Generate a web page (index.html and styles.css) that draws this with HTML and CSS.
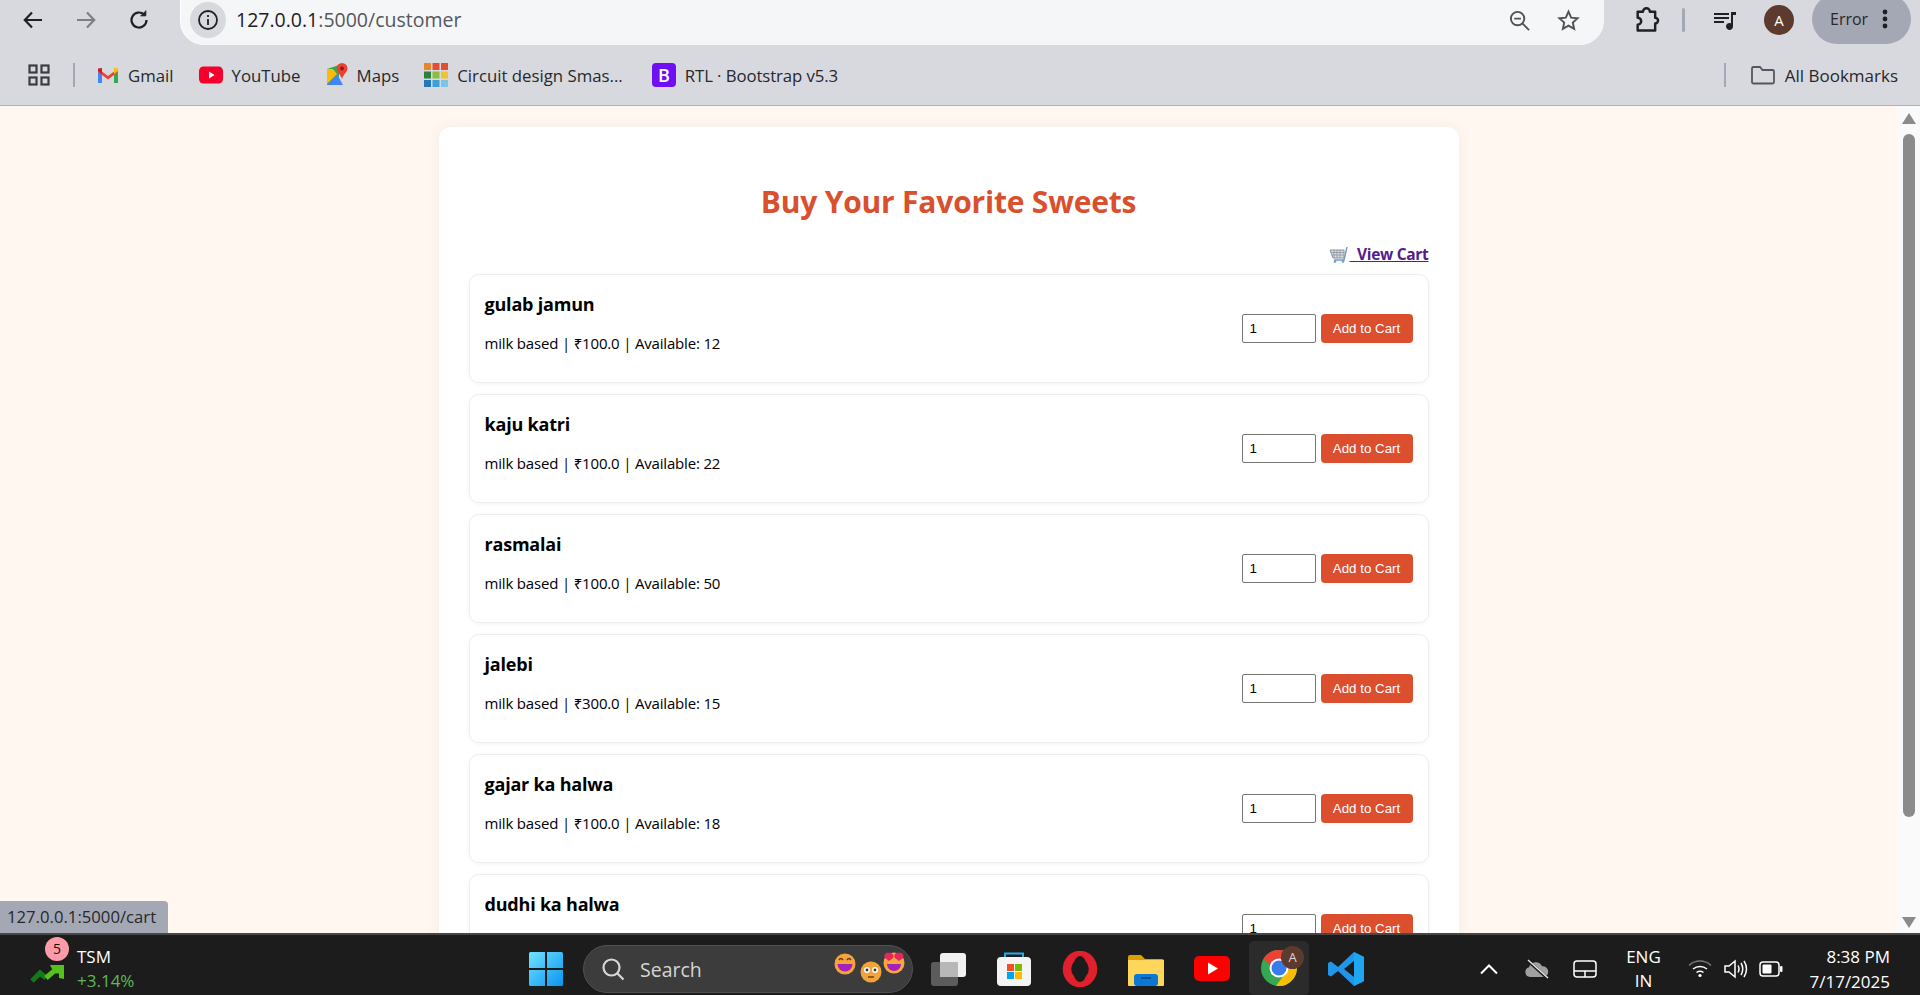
FILE: index.html
```html
<!DOCTYPE html>
<html>
<head>
  <title>Buy Your Favorite Sweets</title>
  <link rel="stylesheet" href="styles.css">
</head>
<body>
  <!-- browser toolbar -->
  <header class="browser">
    <div class="toolbar">
      <div class="nav-btns">
        <svg class="ico" viewBox="0 0 24 24" fill="none" stroke="#1f2024" stroke-width="2.2"><path d="M21 12H4M11 4.5 3.8 12l7.2 7.5"/></svg>
        <svg class="ico" viewBox="0 0 24 24" fill="none" stroke="#7d7f86" stroke-width="2.2"><path d="M3 12h17M13 4.5l7.2 7.5-7.2 7.5"/></svg>
        <svg class="ico" viewBox="0 0 24 24" fill="none" stroke="#1f2024" stroke-width="2.2"><path d="M19.5 12a7.5 7.5 0 1 1-2.4-5.5"/><path d="M18.8 2.5v5.3h-5.3" fill="#1f2024" stroke-width="1"/></svg>
      </div>
      <div class="omnibox">
        <span class="site-info">
          <svg viewBox="0 0 24 24" width="24" height="24" fill="none" stroke="#1f2024" stroke-width="1.8"><circle cx="12" cy="12" r="9"/><path d="M12 11v6M12 7v2"/></svg>
        </span>
        <span class="url">127.0.0.1<span class="url-dim">:5000/customer</span></span>
        <span class="spacer"></span>
        <svg class="ico-sm" viewBox="0 0 24 24" fill="none" stroke="#505257" stroke-width="2"><circle cx="10" cy="10" r="7"/><path d="M15 15l7 7M6.5 10h7"/></svg>
        <svg class="ico-sm star" viewBox="0 0 24 24" fill="none" stroke="#505257" stroke-width="2"><path d="M12 2.8l2.8 6.2 6.7.7-5 4.5 1.4 6.6-5.9-3.4-5.9 3.4 1.4-6.6-5-4.5 6.7-.7z"/></svg>
      </div>
      <svg class="ico puzzle" viewBox="0 0 24 24" fill="none" stroke="#1f2024" stroke-width="2.1"><path d="M4 5h4.500a3 3 0 0 1 6 0H19v5a2.500 2.500 0 0 1 0 5v6H4v-5a3 3 0 0 0 0-6z" stroke-linejoin="round"/></svg>
      <span class="tb-sep"></span>
      <svg class="ico queue" viewBox="0 0 24 24" fill="#1f2024"><path d="M1 5h15v2H1zM1 9h15v2H1zM1 13h10v2H1z"/><path d="M18 4h5v3h-3v11.500a3.500 3.500 0 1 1-2-3.200z"/></svg>
      <span class="avatar">A</span>
      <span class="error-pill">Error
        <svg viewBox="0 0 6 24" width="6" height="24" fill="#1f2024"><circle cx="3" cy="5" r="2.400"/><circle cx="3" cy="12" r="2.400"/><circle cx="3" cy="19" r="2.400"/></svg>
      </span>
    </div>
    <div class="bookmarks">
      <svg class="apps" viewBox="0 0 22 22" fill="none" stroke="#3a3c41" stroke-width="2.200"><rect x="1.500" y="1.500" width="7" height="7"/><rect x="13.500" y="1.500" width="7" height="7"/><rect x="1.500" y="13.500" width="7" height="7"/><rect x="13.500" y="13.500" width="7" height="7"/></svg>
      <span class="bm-sep"></span>
      <a class="bm bm-first">
        <svg viewBox="0 0 22 18" width="22" height="18"><path d="M1 4v13h4V8z" fill="#4285f4"/><path d="M21 4v13h-4V8z" fill="#34a853"/><path d="M1 2.500 11 10l10-7.500V6l-10 7.500L1 6z" fill="#ea4335"/><path d="M1 2.500 5 2v6L1 5z" fill="#c5221f"/><path d="M17 2l4 .5V5l-4 3z" fill="#fbbc04"/></svg>
        Gmail
      </a>
      <a class="bm">
        <svg viewBox="0 0 24 18" width="24" height="18"><rect width="24" height="17" y=".5" rx="4.500" fill="#f5002c"/><path d="M10 5.500l5.500 3.500L10 12.500z" fill="#fff"/></svg>
        YouTube
      </a>
      <a class="bm">
        <svg viewBox="0 0 22 24" width="22" height="24"><path d="M1 6l12-4v20L1 22z" fill="#34a853"/><path d="M1 22l10-11 6 11z" fill="#4285f4"/><path d="M1 6l6 0 4 5-10 10z" fill="#fbbc04"/><path d="M16 0a5.500 5.500 0 0 1 5.500 5.500C21.500 9 17 12 16 16 15 12 10.500 9 10.500 5.500A5.500 5.500 0 0 1 16 0z" fill="#ea4335"/><circle cx="16" cy="5.500" r="2" fill="#8e1b10"/></svg>
        Maps
      </a>
      <a class="bm">
        <svg viewBox="0 0 24 24" width="24" height="24">
          <rect x="0" y="0" width="7" height="7" fill="#e8862e"/><rect x="8.500" y="0" width="7" height="7" fill="#e34d32"/><rect x="17" y="0" width="7" height="7" fill="#e34d32"/>
          <rect x="0" y="8.500" width="7" height="7" fill="#2f7f3f"/><rect x="8.500" y="8.500" width="7" height="7" fill="#8bbd3a"/><rect x="17" y="8.500" width="7" height="7" fill="#f2c12e"/>
          <rect x="0" y="17" width="7" height="7" fill="#2478b8"/><rect x="8.500" y="17" width="7" height="7" fill="#3aa0d8"/><rect x="17" y="17" width="7" height="7" fill="#7cc3e6"/>
        </svg>
        Circuit design Smas...
      </a>
      <a class="bm bm-b">
        <span class="bs-logo">B</span>
        RTL · Bootstrap v5.3
      </a>
      <span class="spacer"></span>
      <span class="bm-sep"></span>
      <a class="bm bm-all">
        <svg viewBox="0 0 24 20" width="24" height="20" fill="none" stroke="#55575c" stroke-width="1.800"><path d="M1 3.500A1.500 1.500 0 0 1 2.500 2H9l2.500 3h10A1.500 1.500 0 0 1 23 6.500V17a1.500 1.500 0 0 1-1.500 1.500h-19A1.500 1.500 0 0 1 1 17z"/></svg>
        All Bookmarks
      </a>
    </div>
  </header>

  <!-- page area -->
  <div class="viewport">
    <div class="page">
      <main class="container">
        <h2>Buy Your Favorite Sweets</h2>
        <div class="cart-link-row">
          <a href="#" class="cart-link"><svg class="cart-ico" viewBox="0 0 20 16" width="20" height="16"><path d="M1 3h14v8H4z" fill="#d8dde3" stroke="#8a94a0"/><path d="M5 3v8M8 3v8M11 3v8M2 5.500h13M3 8h12" stroke="#8a94a0" stroke-width=".8"/><path d="M18 0l-3 13H5" fill="none" stroke="#6f99c9" stroke-width="1.400"/><circle cx="6" cy="14.500" r="1.300" fill="#6f99c9"/><circle cx="14" cy="14.500" r="1.300" fill="#6f99c9"/></svg>&nbsp;&nbsp;View Cart</a>
        </div>

        <div class="item">
          <div class="item-info">
            <h3>gulab jamun</h3>
            <p>milk based | ₹100.0 | Available: 12</p>
          </div>
          <form class="item-form">
            <input type="number" value="1" min="1">
            <button type="button">Add to Cart</button>
          </form>
        </div>
        <div class="item">
          <div class="item-info">
            <h3>kaju katri</h3>
            <p>milk based | ₹100.0 | Available: 22</p>
          </div>
          <form class="item-form">
            <input type="number" value="1" min="1">
            <button type="button">Add to Cart</button>
          </form>
        </div>
        <div class="item">
          <div class="item-info">
            <h3>rasmalai</h3>
            <p>milk based | ₹100.0 | Available: 50</p>
          </div>
          <form class="item-form">
            <input type="number" value="1" min="1">
            <button type="button">Add to Cart</button>
          </form>
        </div>
        <div class="item">
          <div class="item-info">
            <h3>jalebi</h3>
            <p>milk based | ₹300.0 | Available: 15</p>
          </div>
          <form class="item-form">
            <input type="number" value="1" min="1">
            <button type="button">Add to Cart</button>
          </form>
        </div>
        <div class="item">
          <div class="item-info">
            <h3>gajar ka halwa</h3>
            <p>milk based | ₹100.0 | Available: 18</p>
          </div>
          <form class="item-form">
            <input type="number" value="1" min="1">
            <button type="button">Add to Cart</button>
          </form>
        </div>
        <div class="item">
          <div class="item-info">
            <h3>dudhi ka halwa</h3>
            <p>&nbsp;</p>
          </div>
          <form class="item-form">
            <input type="number" value="1" min="1">
            <button type="button">Add to Cart</button>
          </form>
        </div>
      </main>
    </div>
    <div class="scrollbar">
      <span class="arrow-up"></span>
      <span class="thumb"></span>
      <span class="arrow-down"></span>
    </div>
    <div class="status-bubble">127.0.0.1:5000/cart</div>
  </div>

  <!-- windows taskbar -->
  <footer class="taskbar">
    <div class="widget">
      <svg class="widget-ico" viewBox="0 0 36 24" width="36" height="24"><path d="M2 21l8-8 6 5" fill="none" stroke="#0f7d14" stroke-width="5"/><path d="M16 18l8-7 5 0" fill="none" stroke="#55c11c" stroke-width="5"/><path d="M20 5h14v14l-5-1V9h-7z" fill="#55c11c"/></svg>
      <span class="widget-badge">5</span>
      <div class="widget-text">
        <span class="widget-name">TSM</span>
        <span class="widget-val">+3.14%</span>
      </div>
    </div>
    <div class="task-center">
      <svg class="win-logo" viewBox="0 0 36 36" width="36" height="36">
        <defs><linearGradient id="wg" x1="0" y1="0" x2="1" y2="1"><stop offset="0" stop-color="#6fe3ff"/><stop offset="1" stop-color="#0a94f0"/></linearGradient></defs>
        <path d="M1 2.500A1.500 1.500 0 0 1 2.500 1H17v16H1zM19 1h14.500A1.500 1.500 0 0 1 35 2.500V17H19zM1 19h16v16H2.500A1.500 1.500 0 0 1 1 33.500zM19 19h16v14.500a1.500 1.500 0 0 1-1.500 1.500H19z" fill="url(#wg)"/>
      </svg>
      <div class="searchbox">
        <svg viewBox="0 0 24 24" width="24" height="24" fill="none" stroke="#d6d6d6" stroke-width="2.200"><circle cx="10.500" cy="10.500" r="8"/><path d="M16 16l6.500 6.500"/></svg>
        <span class="search-text">Search</span>
        <span class="spacer"></span>
        <svg class="emojis" viewBox="0 0 72 32" width="72" height="32">
          <circle cx="11" cy="12" r="10.500" fill="#f7a33b"/><path d="M3.500 12h15a7.500 7.500 0 0 1-15 0z" fill="#a621b8"/><path d="M5 8q2-3 4 0M13 8q2-3 4 0" fill="none" stroke="#5a3a10" stroke-width="1.400"/>
          <circle cx="37" cy="20" r="10.500" fill="#f2a33c"/><circle cx="33" cy="18" r="3" fill="#fff"/><circle cx="41" cy="18" r="3" fill="#fff"/><circle cx="33" cy="18" r="1.400" fill="#333"/><circle cx="41" cy="18" r="1.400" fill="#333"/><path d="M34 25h6" stroke="#6a3a10" stroke-width="1.400"/>
          <circle cx="60" cy="11" r="10.500" fill="#f6a83d"/><path d="M53 12h14a7 7 0 0 1-14 0z" fill="#a621b8"/><path d="M55 1c-3-1-6 2-4 5l4 3 4-3c2-3-2-6-4-5zM65 1c-3-1-6 2-4 5l4 3 4-3c2-3-2-6-4-5z" fill="#e8265e"/>
        </svg>
      </div>
      <svg class="task-ico task-copy" viewBox="0 0 36 36" width="36" height="36"><rect x="1" y="11" width="27" height="24" rx="3" fill="#5c5c5c"/><rect x="10" y="2" width="26" height="24" rx="3" fill="#f1f1f1"/><rect x="10" y="11" width="18" height="15" fill="#b8b8b8"/></svg>
      <svg class="task-ico" viewBox="0 0 36 36" width="36" height="36"><path d="M9 7V2.500h18V7" fill="none" stroke="#2aa9e8" stroke-width="2"/><rect x="1" y="6" width="34" height="29" rx="4" fill="#f4f4f4"/><rect x="11" y="13" width="7" height="7" fill="#f25022"/><rect x="19" y="13" width="7" height="7" fill="#7fba00"/><rect x="11" y="21" width="7" height="7" fill="#00a4ef"/><rect x="19" y="21" width="7" height="7" fill="#ffb900"/></svg>
      <svg class="task-ico" viewBox="0 0 36 36" width="36" height="36"><ellipse cx="18" cy="18" rx="13" ry="14" fill="none" stroke="#e0202c" stroke-width="8.500"/><ellipse cx="18" cy="18" rx="7" ry="13" fill="#1c1c1c"/></svg>
      <svg class="task-ico" viewBox="0 0 36 36" width="36" height="36"><path d="M0 6a2 2 0 0 1 2-2h11l4 4h17a2 2 0 0 1 2 2v24H0z" fill="#dba100"/><path d="M0 9h36v25a1 1 0 0 1-1 1H1a1 1 0 0 1-1-1z" fill="#ffd65c"/><rect x="6" y="23" width="24" height="12" rx="3" fill="#0a78d4"/><path d="M13 27h10" stroke="#07457c" stroke-width="1.500"/></svg>
      <svg class="task-ico" viewBox="0 0 36 36" width="36" height="36"><rect y="5" width="36" height="25" rx="5" fill="#f00"/><path d="M14 11.500l10 6-10 6z" fill="#fff"/></svg>
      <div class="task-active">
        <svg viewBox="0 0 36 36" width="36" height="36"><circle cx="18" cy="18" r="18" fill="#34a853"/><path d="M18 0a18 18 0 0 1 15.600 9H18a9 9 0 0 0-8.700 6.700L2.400 9A18 18 0 0 1 18 0z" fill="#ea4335"/><path d="M33.600 9A18 18 0 0 1 15 35.800L22.600 25.800A9 9 0 0 0 26 13z" fill="#fbbc04"/><circle cx="18" cy="18" r="9.500" fill="#fff"/><circle cx="18" cy="18" r="7.500" fill="#3a7bea"/></svg>
        <span class="task-badge">A</span>
      </div>
      <svg class="task-ico task-code" viewBox="0 0 36 36" width="36" height="36"><path d="M26 1l10 5v24l-10 5-16-15-7 5.500L0 24v-12l3-1.500 7 5.500z" fill="#2196e8"/><path d="M26 1l10 5v24l-10 5z" fill="#1ea7f0"/><path d="M26 10l-10 8 10 8z" fill="#1c1c1c"/></svg>
    </div>
    <div class="tray">
      <svg class="tray-chev" viewBox="0 0 18 12" width="18" height="12" fill="none" stroke="#fff" stroke-width="2"><path d="M1 10.500l8-8 8 8"/></svg>
      <svg class="tray-cloud" viewBox="0 0 26 20" width="26" height="20"><path d="M6 18a5 5 0 0 1-1-9.800 7 7 0 0 1 13-1 5.500 5.500 0 0 1 2 10.800z" fill="#a0a0a0"/><path d="M3 1l20 18" stroke="#1c1c1c" stroke-width="3"/><path d="M4 1l20 18" stroke="#eee" stroke-width="1.300"/></svg>
      <svg class="tray-pad" viewBox="0 0 24 20" width="24" height="20" fill="none" stroke="#fff" stroke-width="1.500"><rect x="1" y="2" width="22" height="16" rx="3"/><path d="M1 12h22M12 12v6"/></svg>
      <div class="tray-lang">ENG<br>IN</div>
      <svg class="tray-wifi" viewBox="0 0 24 20" width="24" height="20" fill="none" stroke-width="1.500"><path d="M1 6.500a16 16 0 0 1 22 0" stroke="#777"/><path d="M5 10a11 11 0 0 1 14 0M8.500 13.500a6 6 0 0 1 7 0" stroke="#fff"/><circle cx="12" cy="16.500" r="1.600" fill="#fff"/></svg>
      <svg class="tray-vol" viewBox="0 0 24 20" width="24" height="20" fill="none" stroke="#fff" stroke-width="1.500"><path d="M1 7h4l6-5v16l-6-5H1z"/><path d="M14 6.500q2 3.500 0 7M17 4q3.500 6 0 12M20 2q5 8 0 16"/></svg>
      <svg class="tray-batt" viewBox="0 0 24 16" width="24" height="16"><rect x="1" y="1" width="19" height="14" rx="3" fill="none" stroke="#fff" stroke-width="1.500"/><rect x="3.500" y="3.500" width="9" height="9" rx="1" fill="#fff"/><rect x="21" y="5" width="2.500" height="6" rx="1" fill="#fff"/></svg>
      <div class="tray-clock">8:38 PM<br>7/17/2025</div>
    </div>
  </footer>
</body>
</html>
```

FILE: styles.css
```css
* {
  box-sizing: border-box;
}

html, body {
  height: 100%;
}

body {
  margin: 0;
  display: flex;
  flex-direction: column;
  overflow: hidden;
  font-family: "Open Sans", "Noto Sans", sans-serif;
  background-color: #fff7f0;
}

.spacer {
  flex: 1;
}

/* browser chrome */
.browser {
  height: 106px;
  flex: none;
  background-color: #d8d9de;
  border-bottom: 1px solid #b0b2b8;
}

.toolbar {
  height: 45px;
  display: flex;
  align-items: center;
  padding-left: 21px;
  padding-bottom: 5px;
}

.nav-btns {
  width: 160px;
  display: flex;
  gap: 29px;
}

.ico {
  width: 24px;
  height: 24px;
  flex: none;
}

.ico-sm {
  width: 23px;
  height: 23px;
  flex: none;
}

.star {
  margin-left: 26px;
  margin-right: 24px;
}

.omnibox {
  width: 1423px;
  height: 45px;
  margin-bottom: -5px;
  display: flex;
  align-items: center;
  padding-left: 9px;
  padding-bottom: 5px;
  background-color: #f5f6f8;
  border-radius: 0 0 24px 24px;
  box-shadow: -1px 0 0 #fff;
}

.site-info {
  width: 36px;
  height: 36px;
  border-radius: 50%;
  background-color: #d8d9de;
  display: flex;
  align-items: center;
  justify-content: center;
}

.url {
  margin-left: 10px;
  margin-top: -2px;
  font-size: 19.5px;
  color: #1f2024;
}

.url-dim {
  color: #55575c;
}

.puzzle {
  margin-left: 29px;
  width: 28px;
  height: 28px;
}

.tb-sep {
  width: 3px;
  height: 24px;
  margin-left: 21px;
  border-radius: 2px;
  background-color: #a4a8b4;
}

.queue {
  margin-left: 28px;
}

.avatar {
  width: 30px;
  height: 30px;
  margin-left: 27px;
  border-radius: 50%;
  background-color: #5d3a2e;
  color: #fff;
  font-size: 15px;
  display: flex;
  align-items: center;
  justify-content: center;
}

.error-pill {
  width: 99px;
  height: 50px;
  margin-left: 18px;
  margin-top: -3px;
  padding-left: 18px;
  display: flex;
  align-items: center;
  gap: 14px;
  border-radius: 25px;
  background-color: #a4a8b4;
  color: #26282c;
  font-size: 16px;
  flex: none;
}

.bookmarks {
  height: 60px;
  display: flex;
  align-items: center;
  padding-left: 28px;
  padding-right: 22px;
}

.apps {
  width: 22px;
  height: 22px;
}

.bm-sep {
  width: 2px;
  height: 24px;
  margin-left: 23px;
  background-color: #a4a8b4;
}

.bm {
  display: flex;
  align-items: center;
  gap: 9px;
  margin-left: 25px;
  font-size: 16.8px;
  color: #26282c;
}

.bm-first {
  margin-left: 22px;
}

.bs-logo {
  width: 24px;
  height: 24px;
  border-radius: 4px;
  background-color: #7010f2;
  color: #fff;
  font-size: 18px;
  font-weight: 600;
  display: flex;
  align-items: center;
  justify-content: center;
}

.bm-b {
  margin-left: 29px;
  letter-spacing: -0.1px;
}

.bm-all {
  gap: 10px;
  font-size: 17px;
}

/* page area */
.viewport {
  flex: 1;
  position: relative;
  display: flex;
  min-height: 0;
  overflow: hidden;
}

.page {
  flex: 1;
  overflow: hidden;
}

.container {
  width: 1020px;
  margin: 21px auto 0;
  padding: 0 30px;
  background-color: #fff;
  border-radius: 12px;
  box-shadow: 0 0 14px rgba(120, 70, 30, 0.07);
}

h2 {
  margin: 0;
  padding-top: 50px;
  text-align: center;
  font-size: 30px;
  line-height: 50px;
  font-weight: 700;
  letter-spacing: -0.2px;
  color: #d9502e;
}

.cart-link-row {
  margin-top: 11px;
  margin-bottom: 4px;
  height: 32px;
  text-align: right;
}

.cart-link {
  color: #551a8b;
  font-size: 15.5px;
  font-weight: 700;
  letter-spacing: -0.3px;
  line-height: 32px;
}

.cart-ico {
  vertical-align: -3px;
}

.item {
  height: 109px;
  margin-bottom: 11px;
  padding: 0 15px;
  display: flex;
  align-items: center;
  justify-content: space-between;
  border: 1px solid #eeeeee;
  border-radius: 10px;
  box-shadow: 0 1px 4px rgba(0, 0, 0, 0.05);
}

h3 {
  margin: 0 0 14px;
  font-size: 18px;
  line-height: 25px;
  font-weight: 700;
  letter-spacing: -0.2px;
  color: #000;
}

.item-info p {
  margin: 0;
  font-size: 15px;
  line-height: 24px;
  letter-spacing: -0.18px;
  color: #000;
}

.item-info {
  margin-top: -10px;
}

.item-form {
  display: flex;
  gap: 5px;
}

input[type="number"] {
  width: 74px;
  height: 29px;
  padding: 1px 7px;
  font-family: "Liberation Sans", Arial, sans-serif;
  font-size: 13.33px;
  background-color: #fff;
  border: 1px solid #767676;
  border-radius: 2px;
  appearance: textfield;
}

button {
  width: 92px;
  height: 29px;
  padding: 0;
  font-family: "Liberation Sans", Arial, sans-serif;
  font-size: 13.33px;
  color: #fff;
  background-color: #db4f2f;
  border: none;
  border-radius: 4px;
}

.scrollbar {
  width: 23px;
  flex: none;
  display: flex;
  flex-direction: column;
  align-items: center;
  background-color: #fafafa;
}

.thumb {
  width: 12px;
  height: 683px;
  margin-top: 10px;
  border-radius: 6px;
  background-color: #8b8b8b;
}

.arrow-up, .arrow-down {
  width: 0;
  height: 0;
  border-left: 7px solid transparent;
  border-right: 7px solid transparent;
}

.arrow-up {
  margin-top: 7px;
  border-bottom: 11px solid #8b8b8b;
}

.arrow-down {
  margin-top: 100px;
  border-top: 11px solid #8b8b8b;
}

.status-bubble {
  position: absolute;
  left: 0;
  bottom: 0;
  width: 168px;
  height: 32px;
  padding-left: 7px;
  font-size: 16.7px;
  line-height: 32px;
  color: #26282c;
  background-color: #a4a8b4;
  border-top-right-radius: 4px;
}

/* taskbar */
.taskbar {
  height: 62px;
  flex: none;
  position: relative;
  display: flex;
  align-items: center;
  padding-top: 8px;
  background-color: #1c1c1c;
  border-top: 2px solid #474747;
  color: #fff;
}

.widget {
  width: 528px;
  flex: none;
  position: relative;
  display: flex;
  align-items: center;
  padding-left: 30px;
}

.widget-ico {
  margin-top: 6px;
}

.widget-badge {
  position: absolute;
  left: 45px;
  top: -8px;
  width: 24px;
  height: 24px;
  border-radius: 50%;
  background-color: #ff9aa8;
  color: #111;
  font-size: 14px;
  line-height: 24px;
  text-align: center;
}

.widget-text {
  margin-left: 11px;
  display: flex;
  flex-direction: column;
  font-size: 17px;
  line-height: 24px;
}

.widget-val {
  color: #5fb85a;
}

.task-center {
  display: flex;
  align-items: center;
}

.win-logo {
  margin-right: 19px;
}

.searchbox {
  width: 330px;
  height: 48px;
  padding: 0 20px 0 17px;
  display: flex;
  align-items: center;
  background-color: #3c3c3c;
  border: 1px solid #505050;
  border-radius: 24px;
}

.search-text {
  margin-left: 15px;
  font-size: 19.500px;
  color: #d4d4d4;
}

.emojis {
  margin-right: -14px;
  margin-top: -2px;
}

.task-ico {
  margin-left: 30px;
}

.task-copy {
  margin-left: 17px;
}

.task-active {
  width: 60px;
  height: 54px;
  margin-left: 19px;
  margin-top: -2px;
  position: relative;
  display: flex;
  align-items: center;
  justify-content: center;
  background-color: #2b2b2b;
  border-radius: 5px;
}

.task-code {
  margin-left: 19px;
}

.task-badge {
  position: absolute;
  right: 5px;
  top: 5px;
  width: 23px;
  height: 23px;
  border-radius: 50%;
  background-color: #5d3a2e;
  color: #d8d8d8;
  font-size: 13px;
  line-height: 23px;
  text-align: center;
}

.tray {
  position: absolute;
  right: 30px;
  top: 8px;
  bottom: 0;
  display: flex;
  align-items: center;
}

.tray-chev {
  margin-right: 26px;
}

.tray-cloud {
  margin-right: 23px;
}

.tray-pad {
  margin-right: 16px;
}

.tray-lang {
  width: 60px;
  margin-right: 15px;
  text-align: center;
  font-size: 17px;
  line-height: 24px;
}

.tray-wifi {
  margin-right: 12px;
}

.tray-vol {
  margin-right: 11px;
}

.tray-batt {
  margin-right: 26px;
}

.tray-clock {
  text-align: right;
  font-size: 17px;
  line-height: 25px;
}
```
